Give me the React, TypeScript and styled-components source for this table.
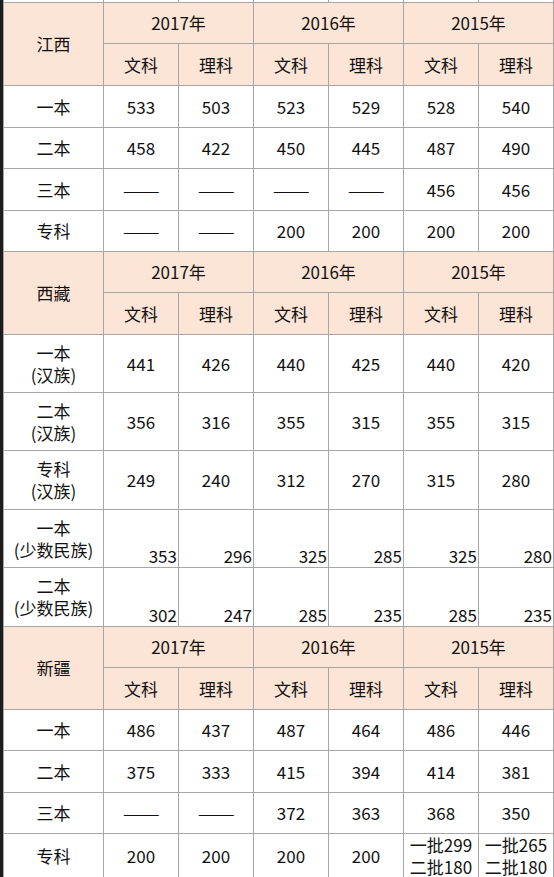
import React from 'react';
import styled, { createGlobalStyle } from 'styled-components';

const GlobalStyle = createGlobalStyle`
  html, body {
    margin: 0;
    padding: 0;
    background: #ffffff;
  }
  body {
    font-family: "Noto Sans CJK SC", "Noto Sans", sans-serif;
    color: #111;
  }
`;

const Page = styled.div`
  display: flex;
  width: 554px;
  height: 877px;
  overflow: hidden;
`;

const EdgeStripe = styled.div`
  width: 3px;
  flex: none;
  background: #1c1c1c;
`;

const Table = styled.table`
  border-collapse: collapse;
  table-layout: fixed;
  width: 551px;
  font-size: 17px;
`;

const Row = styled.tr<{ h: number }>`
  height: ${props => props.h}px;
`;

const Cell = styled.td<{ head?: boolean; corner?: boolean }>`
  border: 1px solid #a6a6a6;
  background: ${props => props.head ? '#fce4d6' : '#ffffff'};
  text-align: ${props => props.corner ? 'right' : 'center'};
  vertical-align: ${props => props.corner ? 'bottom' : 'middle'};
  padding: ${props => props.corner ? '0 1px 0 0' : '0'};
  line-height: 22px;
  overflow: hidden;
  white-space: nowrap;
`;

const SpillCell = styled.td`
  border: 1px solid #a6a6a6;
  border-top: none;
  padding: 0;
  height: 2px;
`;

const TightCell = styled(Cell)`
  vertical-align: top;
  line-height: 22px;
  overflow: visible;
`;

const Label = styled.div`
  line-height: 22px;
`;

const Dash = styled.span`
  display: inline-block;
  transform: scaleX(1.3);
`;

const DASH = '——';

type DataRow = {
  label: string[];
  values: string[];
  corner?: boolean;
  h: number;
};

type Section = {
  name: string;
  rows: DataRow[];
};

const sections: Section[] = [
  {
    name: '江西',
    rows: [
      { label: ['一本'], values: ['533', '503', '523', '529', '528', '540'], h: 42 },
      { label: ['二本'], values: ['458', '422', '450', '445', '487', '490'], h: 41 },
      { label: ['三本'], values: [DASH, DASH, DASH, DASH, '456', '456'], h: 42 },
      { label: ['专科'], values: [DASH, DASH, '200', '200', '200', '200'], h: 41 },
    ],
  },
  {
    name: '西藏',
    rows: [
      { label: ['一本', '(汉族)'], values: ['441', '426', '440', '425', '440', '420'], h: 58 },
      { label: ['二本', '(汉族)'], values: ['356', '316', '355', '315', '355', '315'], h: 58 },
      { label: ['专科', '(汉族)'], values: ['249', '240', '312', '270', '315', '280'], h: 59 },
      { label: ['一本', '(少数民族)'], values: ['353', '296', '325', '285', '325', '280'], corner: true, h: 58 },
      { label: ['二本', '(少数民族)'], values: ['302', '247', '285', '235', '285', '235'], corner: true, h: 59 },
    ],
  },
  {
    name: '新疆',
    rows: [
      { label: ['一本'], values: ['486', '437', '487', '464', '486', '446'], h: 41 },
      { label: ['二本'], values: ['375', '333', '415', '394', '414', '381'], h: 42 },
      { label: ['三本'], values: [DASH, DASH, '372', '363', '368', '350'], h: 41 },
      { label: ['专科'], values: ['200', '200', '200', '200', '一批299\n二批180', '一批265\n二批180'], h: 42 },
    ],
  },
];

const years = ['2017年', '2016年', '2015年'];

const renderValue = (v: string) => (v === DASH ? <Dash>{v}</Dash> : v);

const SectionBlock: React.FC<{ section: Section }> = ({ section }) => (
  <>
    <Row h={41}>
      <Cell head rowSpan={2}>{section.name}</Cell>
      {years.map(y => (
        <Cell head colSpan={2} key={y}>{y}</Cell>
      ))}
    </Row>
    <Row h={42}>
      {years.map(y => (
        <React.Fragment key={y}>
          <Cell head>文科</Cell>
          <Cell head>理科</Cell>
        </React.Fragment>
      ))}
    </Row>
    {section.rows.map((row, i) => (
      <Row h={row.h} key={i}>
        <Cell>
          {row.label.map((l, j) => (
            <Label key={j}>{l}</Label>
          ))}
        </Cell>
        {row.values.map((v, j) =>
          v.includes('\n') ? (
            <TightCell key={j}>
              {v.split('\n').map((part, k) => (
                <div key={k}>{part}</div>
              ))}
            </TightCell>
          ) : (
            <Cell corner={row.corner} key={j}>{renderValue(v)}</Cell>
          )
        )}
      </Row>
    ))}
  </>
);

const App: React.FC = () => (
  <Page>
    <GlobalStyle />
    <EdgeStripe />
    <Table>
      <colgroup>
        <col style={{ width: 100 }} />
        {Array.from({ length: 6 }).map((_, i) => (
          <col key={i} style={{ width: 75 }} />
        ))}
      </colgroup>
      <tbody>
        <tr>
          {Array.from({ length: 7 }).map((_, i) => (
            <SpillCell key={i} />
          ))}
        </tr>
        {sections.map(s => (
          <SectionBlock section={s} key={s.name} />
        ))}
      </tbody>
    </Table>
  </Page>
);

export default App;
